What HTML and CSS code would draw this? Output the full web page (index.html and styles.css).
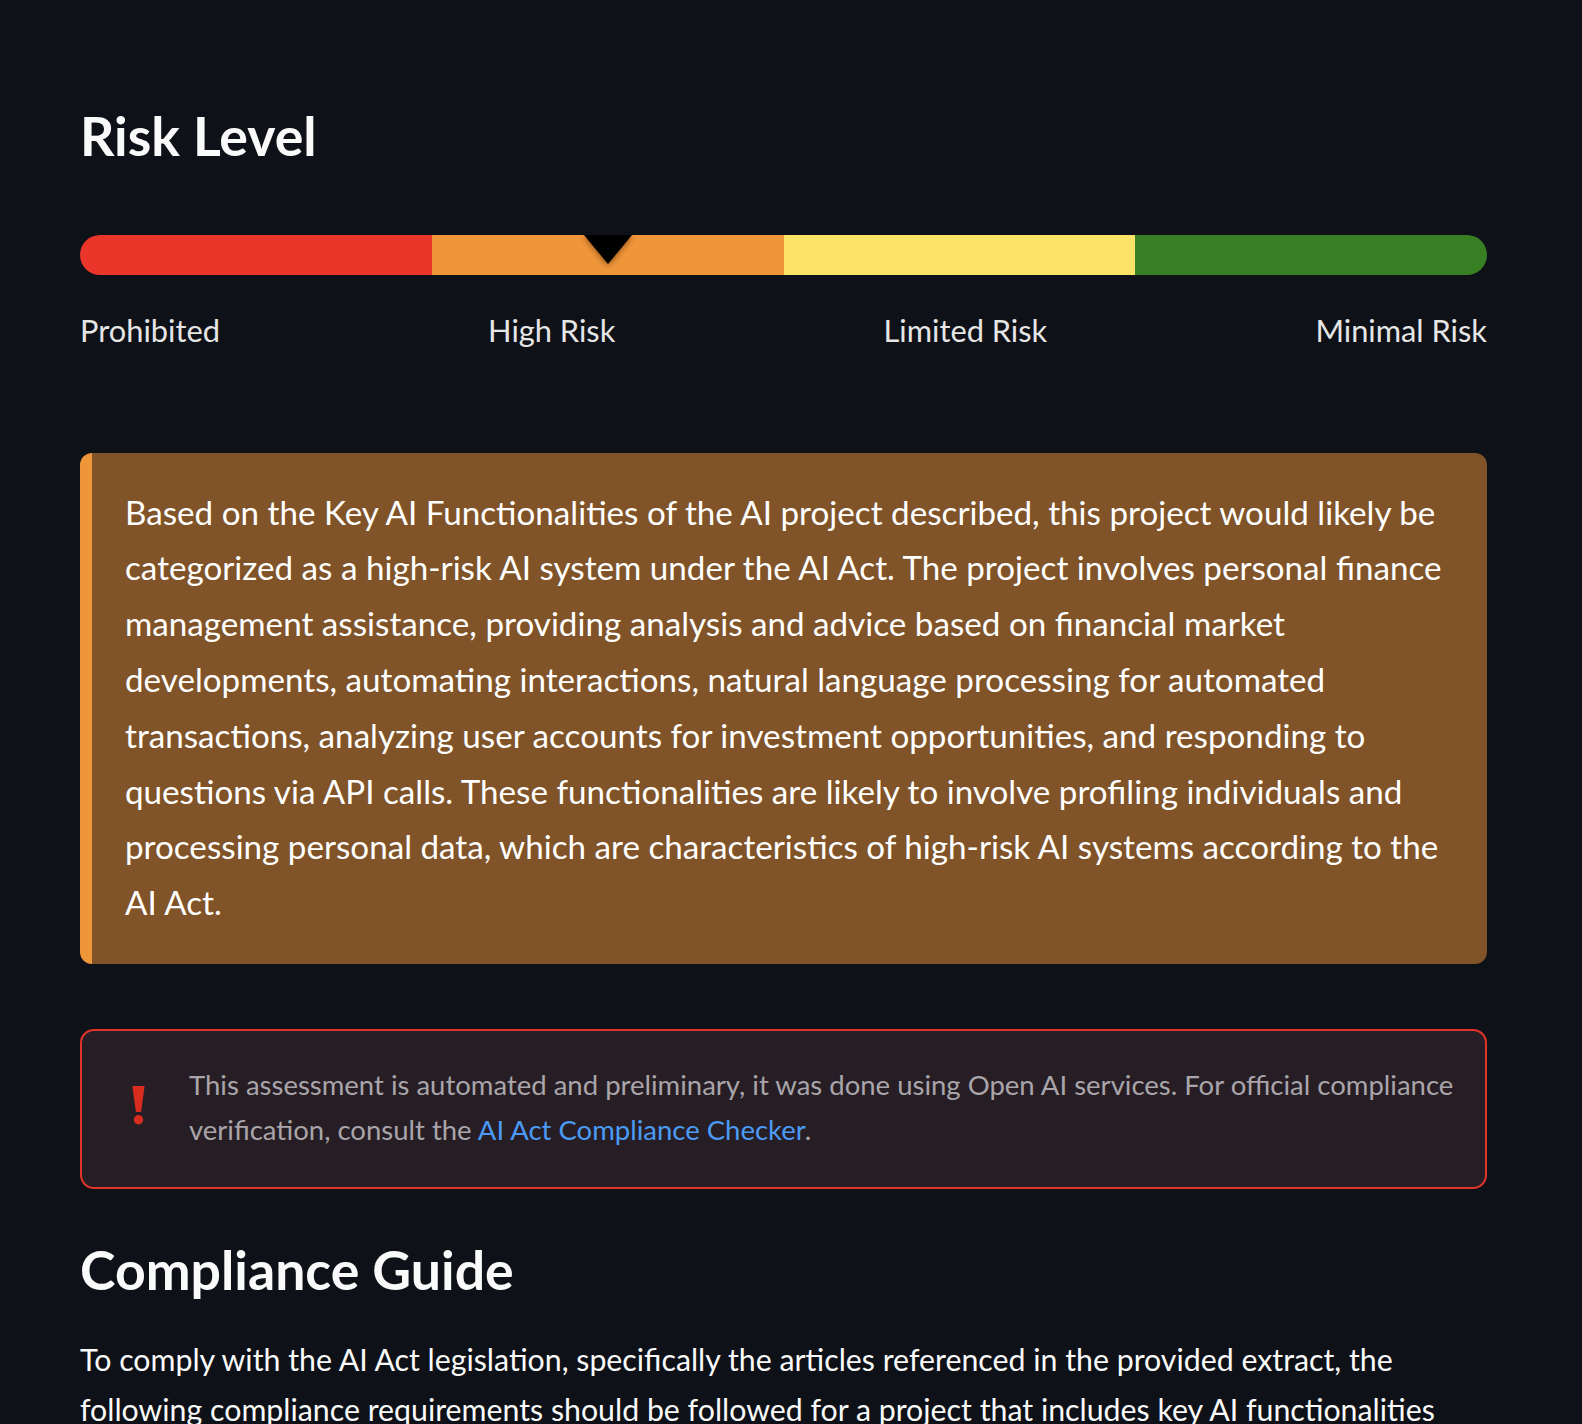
FILE: index.html
```
<!DOCTYPE html>
<html lang="en">
<head>
<meta charset="utf-8">
<title>Risk Level</title>
<link rel="stylesheet" href="styles.css">
</head>
<body>
<main class="main">
  <h2 class="heading heading-risk">Risk Level</h2>

  <div class="risk-bar">
    <div class="seg seg-red"></div>
    <div class="seg seg-orange"><span class="pointer"></span></div>
    <div class="seg seg-yellow"></div>
    <div class="seg seg-green"></div>
  </div>
  <div class="risk-labels">
    <span>Prohibited</span>
    <span>High Risk</span>
    <span>Limited Risk</span>
    <span>Minimal Risk</span>
  </div>

  <div class="result-box">
    <p>Based on the Key AI Functionalities of the AI project described, this project would likely be categorized as a high-risk AI system under the AI Act. The project involves personal finance management assistance, providing analysis and advice based on financial market developments, automating interactions, natural language processing for automated transactions, analyzing user accounts for investment opportunities, and responding to questions via API calls. These functionalities are likely to involve profiling individuals and processing personal data, which are characteristics of high-risk AI systems according to the AI Act.</p>
  </div>

  <div class="alert">
    <svg class="alert-icon" width="13" height="39" viewBox="0 0 13 39" aria-hidden="true">
      <path d="M1.2 0 H11.8 Q12.6 0 12.5 0.9 L9.2 25.2 Q9.1 26 8.3 26 H4.7 Q3.9 26 3.8 25.2 L0.5 0.9 Q0.4 0 1.2 0 Z" fill="#d82c1f"/>
      <circle cx="6.5" cy="33.8" r="4.7" fill="#d82c1f"/>
    </svg>
    <p class="alert-text">This assessment is automated and preliminary, it was done using Open AI services. For official compliance verification, consult the <a class="alert-link" href="#">AI Act Compliance Checker</a>.</p>
  </div>

  <h2 class="heading heading-guide">Compliance Guide</h2>
  <p class="guide-text">To comply with the AI Act legislation, specifically the articles referenced in the provided extract, the following compliance requirements should be followed for a project that includes key AI functionalities such as personal finance management assistance and automated transactions:</p>
</main>
</body>
</html>
```
FILE: styles.css
```
html, body {
  margin: 0;
  padding: 0;
  background: #0e1117;
}

body {
  font-family: "Lato", "Noto Sans", sans-serif;
  color: #fafafa;
}

.main {
  width: 1407px;
  margin-left: 80px;
  padding-top: 104px;
  padding-bottom: 40px;
}

.heading {
  margin: 0;
  font-size: 53.6px;
  font-weight: 700;
  line-height: 63.6px;
  color: #fafafa;
}

.risk-bar {
  display: flex;
  height: 40px;
  margin-top: 67px;
  border-radius: 20px;
  overflow: hidden;
}

.seg {
  flex: 1 1 0;
  position: relative;
}

.seg-red { background: #e9352a; }
.seg-orange { background: #f0963a; }
.seg-yellow { background: #fbe368; }
.seg-green { background: #387e22; }

.pointer {
  position: absolute;
  top: 0;
  left: 50%;
  margin-left: -24px;
  width: 0;
  height: 0;
  border-left: 24px solid transparent;
  border-right: 24px solid transparent;
  border-top: 29px solid #000;
  filter: drop-shadow(0 1px 3px rgba(90, 45, 0, 0.75));
}

.risk-labels {
  display: flex;
  justify-content: space-between;
  margin-top: 37px;
  font-size: 30.8px;
  line-height: 37px;
  color: #e6e6e6;
}

.result-box {
  margin-top: 104px;
  background: #805428;
  border-left: 12px solid #f0963a;
  border-radius: 12px;
  padding: 32px 26px 33px 33px;
}

.result-box p {
  margin: 0;
  font-size: 33.2px;
  line-height: 55.8px;
  color: #ffffff;
}

.alert {
  display: flex;
  align-items: center;
  gap: 44px;
  margin-top: 65px;
  background: #261e24;
  border: 2px solid #e3342a;
  border-radius: 14px;
  padding: 31px 30px 34px 50px;
}

.alert-icon {
  flex: 0 0 auto;
  margin-top: -4px;
}

.alert-text {
  margin: 0;
  font-size: 27.5px;
  line-height: 45.4px;
  color: #a9a5aa;
}

.alert-link {
  color: #4b9bf5;
  text-decoration: none;
}

.heading-guide {
  margin-top: 49px;
}

.guide-text {
  margin: 34px 0 0;
  font-size: 30.3px;
  line-height: 49.4px;
  color: #fafafa;
}
```
